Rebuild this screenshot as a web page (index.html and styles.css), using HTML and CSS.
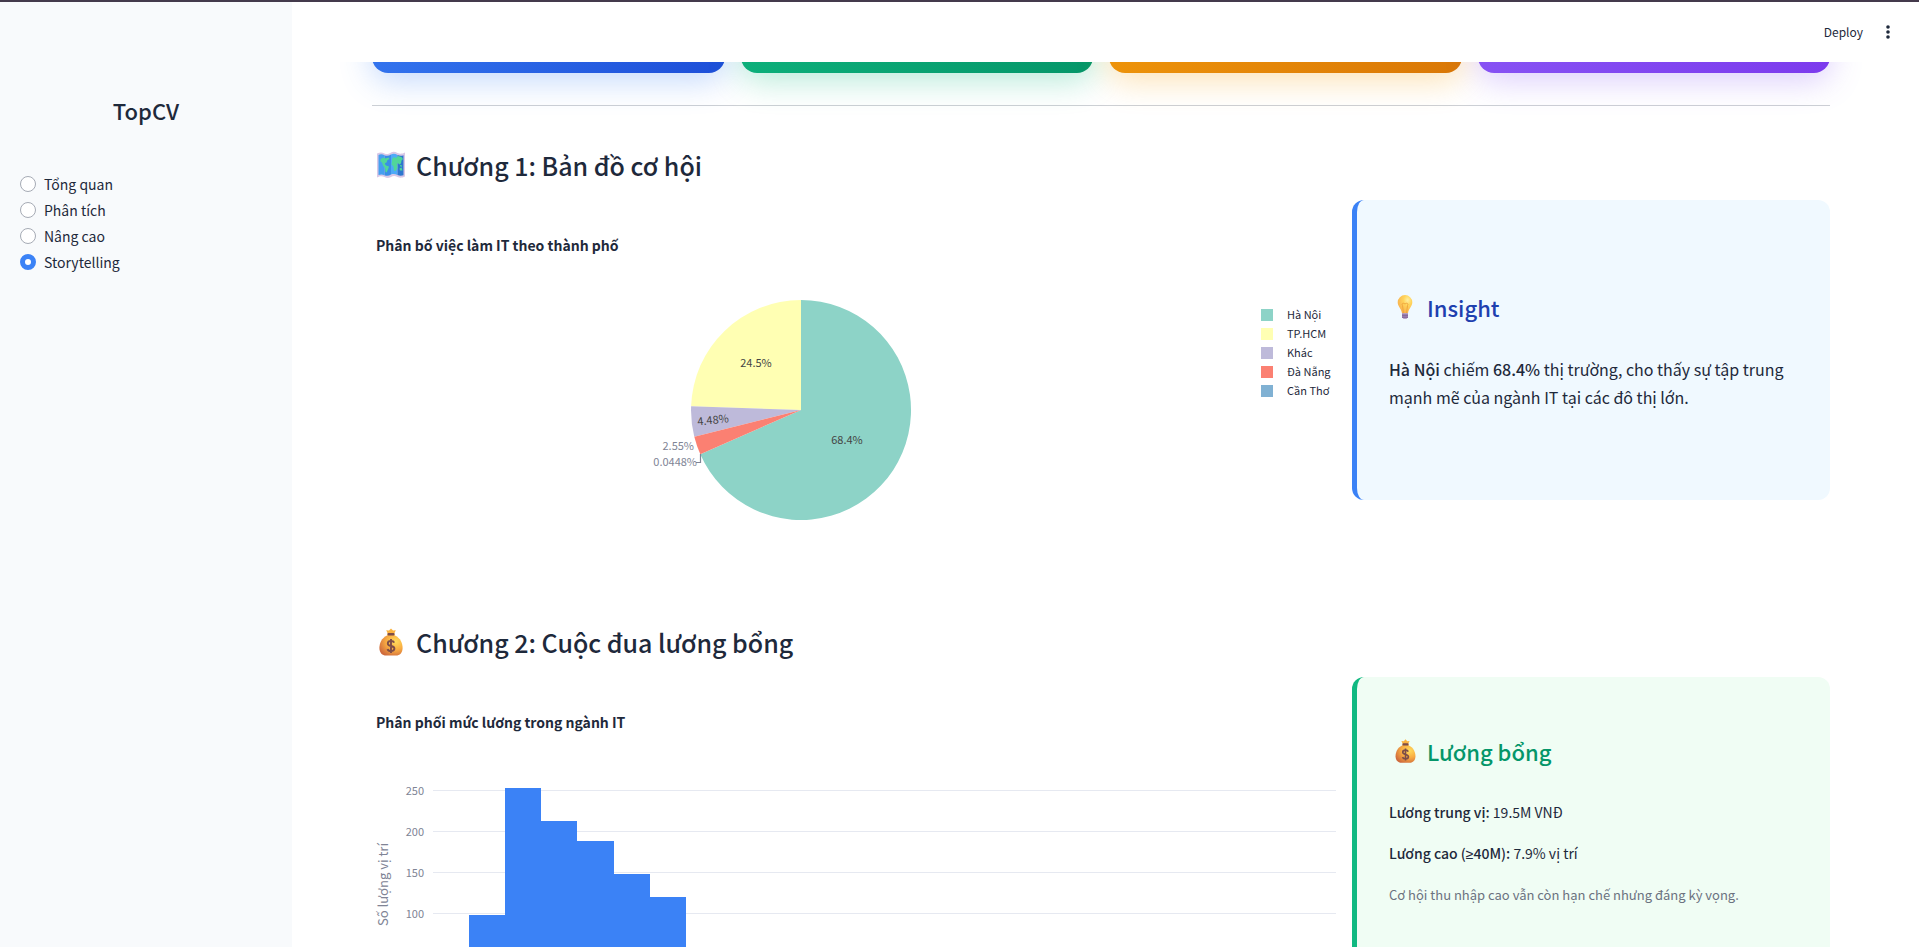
FILE: index.html
```html
<!DOCTYPE html>
<html lang="vi">
<head>
<meta charset="utf-8">
<title>TopCV</title>
<meta name="viewport" content="width=device-width, initial-scale=1">
<link rel="stylesheet" href="styles.css">
</head>
<body>
<svg class="defs" aria-hidden="true">
  <defs>
    <radialGradient id="bag-fill" cx="0.7" cy="0.3" r="0.8">
      <stop offset="0" stop-color="#ffdc5c"/><stop offset="0.5" stop-color="#f9ad42"/><stop offset="1" stop-color="#cf6a3c"/>
    </radialGradient>
    <radialGradient id="bulb-fill" cx="0.68" cy="0.28" r="0.8">
      <stop offset="0" stop-color="#fff0a0"/><stop offset="0.35" stop-color="#ffd45c"/><stop offset="1" stop-color="#f7ad4c"/>
    </radialGradient>
    <symbol id="bag" viewBox="0 0 24 28">
      <path d="M8.500 5 7.200 2.200 10 2.600 12 .4l2 2.200 2.800-.4L15.500 5l.3 4H8.200z" fill="#fbb33f"/>
      <path d="M8 7.500C2.500 10 .4 15.500.4 20c0 5 3 7.600 6.600 7.600h10c3.600 0 6.600-2.600 6.600-7.600 0-4.500-2.100-10-7.600-12.500z" fill="url(#bag-fill)"/>
      <rect x="8.500" y="5" width="7" height="2.600" rx="1" fill="#7d4d48"/>
      <path d="M15.200 14.700c-.5-1.200-1.700-1.700-3.200-1.700-2 0-3.200.9-3.200 2.400 0 3.600 6.600 1.600 6.600 5.200 0 1.600-1.400 2.500-3.400 2.500-1.800 0-3-.7-3.500-2M12 11v14" fill="none" stroke="#7d4d48" stroke-width="1.900"/>
    </symbol>
  </defs>
</svg>
<div class="app">
  <aside class="sidebar">
    <h1 class="brand">TopCV</h1>
    <form class="nav">
      <label class="nav-item"><input class="radio" type="radio" name="page">Tổng quan</label>
      <label class="nav-item"><input class="radio" type="radio" name="page">Phân tích</label>
      <label class="nav-item"><input class="radio" type="radio" name="page">Nâng cao</label>
      <label class="nav-item"><input class="radio" type="radio" name="page" checked>Storytelling</label>
    </form>
  </aside>

  <main class="main">
    <header class="toolbar">
      <button class="tool" type="button">Deploy</button>
      <button class="tool" type="button" aria-label="Menu">
        <svg width="16" height="16" viewBox="0 0 16 16" fill="currentColor"><circle cx="8" cy="3" r="1.800"/><circle cx="8" cy="8" r="1.800"/><circle cx="8" cy="13" r="1.800"/></svg>
      </button>
    </header>

    <div class="content">
      <div class="kpis">
        <div class="kpi kpi-blue"></div>
        <div class="kpi kpi-green"></div>
        <div class="kpi kpi-amber"></div>
        <div class="kpi kpi-violet"></div>
      </div>
      <hr class="divider">

      <section class="chapter">
        <h2 class="chapter-title">
          <svg class="chapter-icon" viewBox="0 0 36 32" aria-hidden="true">
            <path d="M5 4.500c3-1.500 5-1.500 7.500 0 2.500 1 4.500.500 6.500-1 2-1 4-1 6.500.500 2.500 1 4.500 1 7.500-.500v24c-3 1.500-5 1.500-7.500.500-2.500-1.500-4.500-1.500-6.500 0-2 1-4 1.500-6.500 0-2.500-1-4.500-1-7.500.500z" fill="#d9c8e6"/>
            <path d="M6.500 6c2-1 4-.8 6 .3v19.900c-2-.9-4-.9-6-.1z" fill="#459ff0"/>
            <path d="M12.500 6.300c2.400 1 4.500.5 6.500-.8v20c-2 1.300-4.100 1.700-6.500.7z" fill="#3a8ee6"/>
            <path d="M19 5.500c2-1 4-1 6.500.5v20c-2.500-1.200-4.500-1.200-6.500-.5z" fill="#4daaf7"/>
            <path d="M25.500 6c2 .9 4 1 6 .2v20c-2 .7-4 .7-6-.2z" fill="#2e77cf"/>
            <path d="M8.500 10l3-1.500 2 1 3-1 1 1.500-2 1-1 2.500-2 1 1.500 2 3 1-1 3-1.500 3-1-.5-.5-4-2-2.500-1-3-1.500-1zM20 10l2-2 2 1 2-2 3.500 1 1.500 2-1.500 1.500-.5 3-2 1-1-1.500-1 1 .5 4-2 3-1.500-.5-.5-4-2-2 .5-3.500zM27.500 19.500l2-1 1 3h-2.500zM28 16l2 .5v1.200l-2-.5z" fill="#50d69a"/>
          </svg>
          Chương 1: Bản đồ cơ hội
        </h2>
        <div class="columns">
          <figure class="chart">
            <figcaption class="chart-title">Phân bố việc làm IT theo thành phố</figcaption>
            <div class="pie-area">
              <div class="pie-wrap">
                <svg class="pie" width="320" height="220" viewBox="-160 -110 320 220" role="img" aria-label="Phân bố việc làm IT">
                  <path d="M0 0V-110A110 110 0 1 1 -100.700 44.200z" fill="#8dd3c7"/>
                  <path d="M0 0L-109.900 -3.700A110 110 0 0 1 0 -110z" fill="#ffffb3"/>
                  <path d="M0 0L-106.700 26.800A110 110 0 0 1 -109.900 -3.700z" fill="#bebada"/>
                  <path d="M0 0L-100.700 44.200A110 110 0 0 1 -106.700 26.800z" fill="#fb8072"/>
                  <path d="M-100.500 44v8.500h-4.500" fill="none" stroke="#808495" stroke-width="1.200"/>
                  <text class="slice" x="46" y="34">68.4%</text>
                  <text class="slice" x="-45" y="-43">24.5%</text>
                  <text class="slice" x="-88" y="14" transform="rotate(-6 -89 10)">4.48%</text>
                  <text class="slice slice-out" x="-107" y="40">2.55%</text>
                  <text class="slice slice-out" x="-104" y="56">0.0448%</text>
                </svg>
              </div>
              <ul class="legend">
                <li class="legend-item"><span class="swatch swatch-1"></span>Hà Nội</li>
                <li class="legend-item"><span class="swatch swatch-2"></span>TP.HCM</li>
                <li class="legend-item"><span class="swatch swatch-3"></span>Khác</li>
                <li class="legend-item"><span class="swatch swatch-4"></span>Đà Nẵng</li>
                <li class="legend-item"><span class="swatch swatch-5"></span>Cần Thơ</li>
              </ul>
            </div>
          </figure>
          <article class="note note-blue">
            <h3 class="note-title">
              <svg class="note-icon" viewBox="0 0 32 28" aria-hidden="true">
                <path d="M16 2a7.300 7.300 0 0 0-7.300 7.300c0 4.200 3.600 6.200 4.300 11h6c.7-4.800 4.300-6.800 4.300-11A7.300 7.300 0 0 0 16 2z" fill="url(#bulb-fill)"/>
                <path d="M14.500 20l-1-7.500c-1.300-2 .8-3 2.500-1.500 1.700-1.500 3.800-.5 2.500 1.500l-1 7.500" fill="none" stroke="#f0a63c" stroke-width="1"/>
                <path d="M13 20.300h6v4l-1.500 1.500h-3L13 24.300z" fill="#a487b5"/>
                <path d="M13 22.300h6M13 24.200h6" stroke="#6f558c" stroke-width=".7"/>
              </svg>
              Insight
            </h3>
            <p class="lead"><strong>Hà Nội</strong> chiếm <strong>68.4%</strong> thị trường, cho thấy sự tập trung mạnh mẽ của ngành IT tại các đô thị lớn.</p>
          </article>
        </div>
      </section>

      <section class="chapter">
        <h2 class="chapter-title">
          <svg class="chapter-icon" viewBox="0 0 36 32" aria-hidden="true"><use href="#bag" x="7" y="2" width="24" height="28"/></svg>
          Chương 2: Cuộc đua lương bổng
        </h2>
        <div class="columns">
          <figure class="chart">
            <figcaption class="chart-title">Phân phối mức lương trong ngành IT</figcaption>
            <div class="histogram">
              <div class="axis-title">Số lượng vị trí</div>
              <div class="ticks">
                <span>250</span><span>200</span><span>150</span><span>100</span>
              </div>
              <div class="plot">
                <div class="bar" style="height:81px"></div>
                <div class="bar" style="height:208px"></div>
                <div class="bar" style="height:175px"></div>
                <div class="bar" style="height:155px"></div>
                <div class="bar" style="height:122px"></div>
                <div class="bar" style="height:99px"></div>
              </div>
            </div>
          </figure>
          <article class="note note-green">
            <h3 class="note-title">
              <svg class="note-icon" viewBox="0 0 32 28" aria-hidden="true"><use href="#bag" x="6" y="2" width="21" height="24"/></svg>
              Lương bổng
            </h3>
            <p><strong>Lương trung vị:</strong> 19.5M VNĐ</p>
            <p><strong>Lương cao (<span class="math">≥</span>40M):</strong> 7.9% vị trí</p>
            <p class="muted">Cơ hội thu nhập cao vẫn còn hạn chế nhưng đáng kỳ vọng.</p>
          </article>
        </div>
      </section>
    </div>
  </main>
</div>
</body>
</html>
```
FILE: styles.css
```css
* { box-sizing: border-box; }

body {
  margin: 0;
  height: 100vh;
  overflow: hidden;
  background: #fff;
  color: #1e293b;
  font-family: "Noto Sans CJK SC", "Noto Sans", sans-serif;
  font-size: 14px;
  line-height: 26px;
}

h1, h2, h3, p, ul, figure { margin: 0; padding: 0; }
h1, h2, h3, strong { font-weight: 500; }

.defs { display: block; width: 0; height: 0; }

.app {
  display: flex;
  height: 100vh;
  border-top: 2px solid #443a4c;
}

.sidebar {
  flex: 0 0 292px;
  padding: 91px 20px 0;
  background: #f8fafc;
}
.brand {
  margin-bottom: 44px;
  font-size: 22px;
  line-height: 34px;
  text-align: center;
}
.nav { display: flex; flex-direction: column; }
.nav-item { display: flex; align-items: center; gap: 8px; }
.radio {
  appearance: none;
  width: 16px;
  height: 16px;
  margin: 0;
  border: 1px solid #a6abb5;
  border-radius: 50%;
  background: #fff;
}
.radio:checked { border: 5px solid #3b82f6; }

.main { flex: 1; min-width: 0; overflow: hidden; }

.toolbar {
  position: relative;
  z-index: 1;
  display: flex;
  justify-content: flex-end;
  align-items: center;
  gap: 17px;
  height: 60px;
  padding-right: 23px;
  background: #fff;
}
.tool {
  display: flex;
  padding: 0;
  border: 0;
  background: none;
  color: #1e293b;
  font: inherit;
  font-size: 12px;
}

.content { padding: 0 89px 0 80px; }

.kpis {
  display: grid;
  grid-template-columns: repeat(4, 1fr);
  gap: 16px;
  margin-top: -139px;
}
.kpi { height: 150px; border-radius: 16px; }
.kpi-blue { background: linear-gradient(135deg, #3b82f6, #1d4ed8); box-shadow: 0 8px 32px rgba(59, 130, 246, 0.3); }
.kpi-green { background: linear-gradient(135deg, #10b981, #059669); box-shadow: 0 8px 32px rgba(16, 185, 129, 0.3); }
.kpi-amber { background: linear-gradient(135deg, #f59e0b, #d97706); box-shadow: 0 8px 32px rgba(245, 158, 11, 0.3); }
.kpi-violet { background: linear-gradient(135deg, #8b5cf6, #7c3aed); box-shadow: 0 8px 32px rgba(139, 92, 246, 0.3); }

.divider {
  margin: 32px 0;
  border: 0;
  border-top: 1px solid #cdd0d5;
}

.chapter-title {
  display: flex;
  align-items: center;
  gap: 8px;
  padding-top: 4px;
  margin-bottom: 12px;
  font-size: 25px;
  line-height: 46px;
}
.chapter-icon { width: 36px; height: 32px; }

.columns {
  display: grid;
  grid-template-columns: 964fr 478fr;
  gap: 16px;
  align-items: start;
  height: 415px;
}

.chart-title {
  padding: 32px 4px 42px;
  font-size: 14px;
  font-weight: 700;
}

.pie-area { display: flex; }
.pie-wrap { flex: 1; display: flex; justify-content: center; }
.slice {
  fill: #444;
  font-size: 11px;
  text-anchor: middle;
}
.slice-out { fill: #808495; text-anchor: end; }

.legend {
  flex: 0 0 106px;
  padding: 5px 0 0 31px;
  list-style: none;
  font-size: 11px;
  line-height: 19px;
  white-space: nowrap;
}
.legend-item { display: flex; align-items: center; gap: 14px; }
.swatch { width: 12px; height: 12px; }
.swatch-1 { background: #8dd3c7; }
.swatch-2 { background: #ffffb3; }
.swatch-3 { background: #bebada; }
.swatch-4 { background: #fb8072; }
.swatch-5 { background: #80b1d3; }

.histogram { display: flex; padding-top: 13px; }
.axis-title {
  width: 22px;
  height: 190px;
  line-height: 22px;
  font-size: 13px;
  color: #808495;
  writing-mode: vertical-rl;
  transform: rotate(180deg);
  text-align: center;
}
.ticks {
  display: flex;
  flex-direction: column;
  width: 39px;
  margin-top: -20px;
  padding-right: 9px;
  text-align: right;
  color: #808495;
  font-size: 11px;
  line-height: 41px;
}
.plot {
  flex: 1;
  display: flex;
  align-items: flex-end;
  height: 206px;
  background: repeating-linear-gradient(#e6e9f1 0 1px, transparent 1px 41px);
}
.bar { flex: 0 0 4%; background: #3b82f6; }
.bar:first-child { margin-left: 4%; }

.note {
  display: flex;
  flex-direction: column;
  justify-content: center;
  min-height: 300px;
  padding: 32px;
  border-left: 5px solid;
  border-radius: 12px;
}
.note-blue { background: #f0f9ff; border-color: #3b82f6; }
.note-green { background: #f0fdf4; border-color: #10b981; gap: 15px; padding-bottom: 44px; }
.note strong, .note p { color: #1e293b; }
.note-title {
  display: flex;
  align-items: center;
  gap: 6px;
  font-size: 22px;
  line-height: 34px;
}
.note-icon { width: 32px; height: 28px; }
.note-blue .note-title { color: #1e40af; margin-bottom: 31px; }
.note-green .note-title { color: #059669; margin-bottom: 16px; }
.note .lead { font-size: 16px; line-height: 28px; }
.note .muted { color: #6b7280; font-size: 13px; }
.math { font-family: "Noto Sans", sans-serif; }
```
